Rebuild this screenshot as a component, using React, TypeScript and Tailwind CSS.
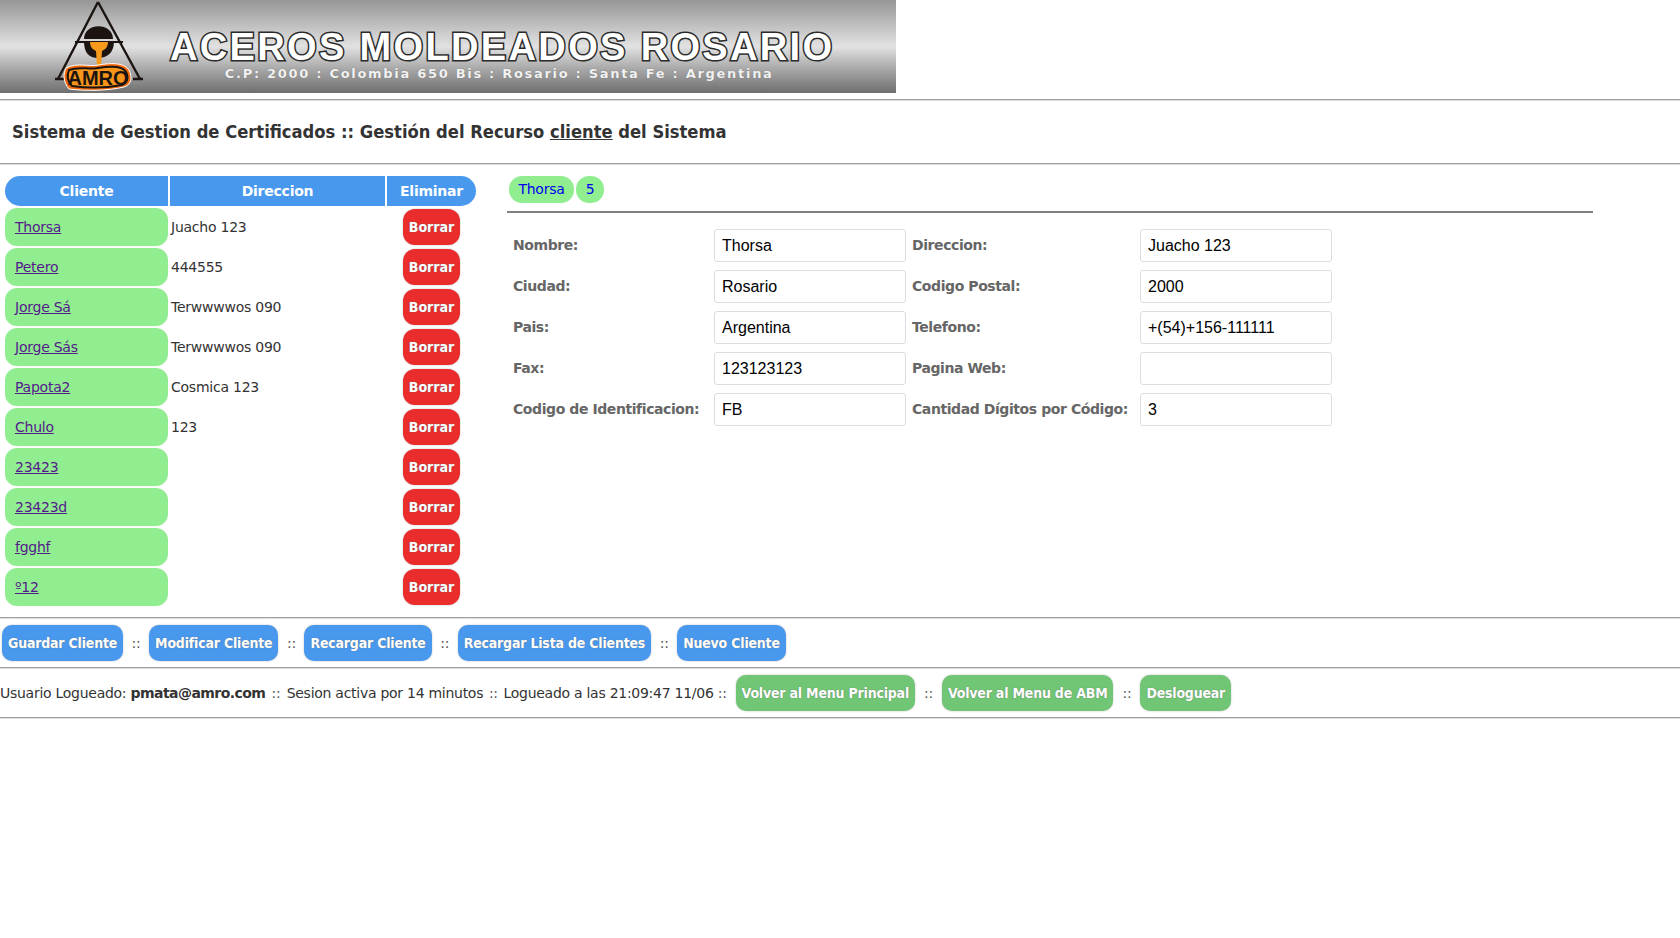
const clientes = [
  { nombre: "Thorsa", direccion: "Juacho 123" },
  { nombre: "Petero", direccion: "444555" },
  { nombre: "Jorge Sá", direccion: "Terwwwwos 090" },
  { nombre: "Jorge Sás", direccion: "Terwwwwos 090" },
  { nombre: "Papota2", direccion: "Cosmica 123" },
  { nombre: "Chulo", direccion: "123" },
  { nombre: "23423", direccion: "" },
  { nombre: "23423d", direccion: "" },
  { nombre: "fgghf", direccion: "" },
  { nombre: "º12", direccion: "" },
]

const campos = [
  ["Nombre:", "Thorsa", "Direccion:", "Juacho 123"],
  ["Ciudad:", "Rosario", "Codigo Postal:", "2000"],
  ["Pais:", "Argentina", "Telefono:", "+(54)+156-111111"],
  ["Fax:", "123123123", "Pagina Web:", ""],
  ["Codigo de Identificacion:", "FB", "Cantidad Dígitos por Código:", "3"],
]

const Sep = ({ className = "" }: { className?: string }) => (
  <span className={`text-[#555] ${className}`}>::</span>
)

function Boton({ children, color }: { children: string; color: "blue" | "green" }) {
  return (
    <a
      className={`inline-flex h-9 items-center rounded-[10px] px-[6px] font-stretch-condensed text-[14px] font-bold tracking-[-0.2px] text-white shadow-[0_0_2px_#bbb] [text-shadow:0_0_1px_#666] ${
        color === "blue" ? "bg-[#4898ee]" : "bg-[#70c674]"
      }`}
    >
      {children}
    </a>
  )
}

function Logo() {
  return (
    <svg viewBox="0 0 100 93" className="h-[93px] w-[100px] shrink-0">
      <path d="M50 2 L10 79 M50 2 L92 79" stroke="#1c1410" strokeWidth="2.4" fill="none" />
      <path d="M7 79 H16 M85 79 H95" stroke="#1c1410" strokeWidth="2.4" />
      <path d="M36 39 C36 22 65 22 65 39 Z" fill="#1c1410" />
      <path d="M27 42 H75" stroke="#1c1410" strokeWidth="2" />
      <path d="M36 41 H66 C66 53 59 58 50 58 C41 58 36 53 36 41 Z" fill="#1c1410" />
      <path d="M42 42 H60 C60 48 56 50 54 51 L53 67 H49 L48 51 C46 50 42 48 42 42 Z" fill="#f59a1c" />
      <path d="M18 68 C30 62 40 67 50 65 C62 63 76 62 81 70 C85 78 83 85 76 87 C60 91 36 91 21 89 C15 82 15 74 18 68 Z" fill="#f26a0a" stroke="#fff" strokeWidth="1" />
      <path d="M21 70 C32 66 40 70 50 68 C62 66 75 66 78 72 C81 78 79 83 74 85 C58 88 38 88 24 86 C19 81 19 75 21 70 Z" fill="#f7941a" stroke="#1c1410" strokeWidth="2" />
      <text x="50" y="85" textAnchor="middle" fontFamily="'Liberation Sans',sans-serif" fontWeight="700" fontSize="20" fill="#1c1410">AMRO</text>
    </svg>
  )
}

export default function App() {
  return (
    <div className="min-h-[938px] bg-white font-['DejaVu_Sans',sans-serif] text-[14px] tracking-[-0.24px] text-[#333]">
      {/* Banner */}
      <div className="flex h-[93px] w-[896px] bg-gradient-to-b from-[#979797] via-[#e2e2e2] to-[#6f6f6f] pl-[48px] tracking-normal">
        <Logo />
        <div className="ml-[22px] flex flex-col items-center pt-[25px]">
          <div className="font-['Liberation_Sans',sans-serif] text-[38px] leading-[44px] font-bold tracking-[2.35px] whitespace-nowrap text-white [-webkit-text-stroke:3px_#2a2a2a] [paint-order:stroke_fill]">
            ACEROS MOLDEADOS ROSARIO
          </div>
          <div className="mt-[-3px] mr-[6px] text-[13px] leading-4 font-bold tracking-[1.7px] whitespace-nowrap text-[#f2f2f2] [text-shadow:0_0_1px_#666]">
            C.P: 2000 : Colombia 650 Bis : Rosario : Santa Fe : Argentina
          </div>
        </div>
      </div>

      <hr className="mt-[6px] border-t border-b-0 border-[#a0a0a0] shadow-[0_1px_0_#ddd]" />
      <h1 className="flex h-[63px] items-center pl-3 font-stretch-condensed text-[18.2px] font-bold tracking-normal text-[#333]">
        <span className="whitespace-nowrap">
          Sistema de Gestion de Certificados :: Gestión del Recurso <u>cliente</u> del Sistema
        </span>
      </h1>
      <hr className="border-t border-b-0 border-[#a0a0a0] shadow-[0_1px_0_#ddd]" />

      {/* Contenido */}
      <div className="flex h-[453px] items-start pt-3">
        <div className="ml-[5px] w-[471px] shrink-0">
          <div className="grid grid-cols-[163px_215px_89px] gap-x-[2px] font-bold text-white">
            <div className="flex h-[30px] items-center justify-center rounded-tl-[15px] rounded-bl-[15px] bg-[#4898ee]">Cliente</div>
            <div className="flex h-[30px] items-center justify-center bg-[#4898ee]">Direccion</div>
            <div className="flex h-[30px] items-center justify-center rounded-tr-[15px] rounded-br-[15px] bg-[#4898ee]">Eliminar</div>
          </div>
          <div className="mt-[2px] flex flex-col gap-y-[2px]">
            {clientes.map((c) => (
              <div key={c.nombre} className="grid h-[38px] grid-cols-[163px_215px_89px] items-center gap-x-[2px]">
                <div className="flex h-[38px] items-center rounded-[12px] bg-[#90ee90] pl-[10px]">
                  <a className="text-[#551a8b] underline">{c.nombre}</a>
                </div>
                <div className="pl-[1px]">{c.direccion}</div>
                <div className="flex justify-center">
                  <a className="flex h-9 w-[57px] items-center justify-center rounded-[12px] bg-[#ea2c2c] font-stretch-condensed font-bold tracking-normal text-white shadow-[0_0_2px_#bbb] [text-shadow:0_0_1px_#666]">
                    Borrar
                  </a>
                </div>
              </div>
            ))}
          </div>
        </div>

        <div className="ml-[31px] w-[1086px]">
          <div className="flex h-[37px] gap-[2px] border-b-2 border-[#808080] pl-[2px]">
            <span className="flex h-[27px] w-[65px] items-center justify-center rounded-[13px] bg-[#90ee90] text-[#0000ee]">Thorsa</span>
            <span className="flex h-[27px] w-[28px] items-center justify-center rounded-[13px] bg-[#90ee90] text-[#0000ee]">5</span>
          </div>
          <div className="mt-4 flex flex-col gap-y-2">
            {campos.map(([l1, v1, l2, v2]) => (
              <div key={l1} className="grid h-[33px] grid-cols-[201px_192px_6px_222px_6px_192px] items-center pl-[6px] font-bold tracking-[-0.42px] text-[#666]">
                <label>{l1}</label>
                <input
                  readOnly
                  value={v1}
                  className="col-start-2 h-[33px] rounded-[3px] border border-[#ddd] px-[7px] font-['Liberation_Sans',sans-serif] text-[16px] font-normal tracking-normal text-black"
                />
                <label className="col-start-4 whitespace-nowrap">{l2}</label>
                <input
                  readOnly
                  value={v2}
                  className="col-start-6 h-[33px] rounded-[3px] border border-[#ddd] px-[7px] font-['Liberation_Sans',sans-serif] text-[16px] font-normal tracking-normal text-black"
                />
              </div>
            ))}
          </div>
        </div>
      </div>

      <hr className="border-t border-b-0 border-[#a0a0a0] shadow-[0_1px_0_#ddd]" />
      <div className="flex h-[49px] items-center gap-[8.5px] pt-[1px] pl-[2px]">
        <Boton color="blue">Guardar Cliente</Boton>
        <Sep />
        <Boton color="blue">Modificar Cliente</Boton>
        <Sep />
        <Boton color="blue">Recargar Cliente</Boton>
        <Sep />
        <Boton color="blue">Recargar Lista de Clientes</Boton>
        <Sep />
        <Boton color="blue">Nuevo Cliente</Boton>
      </div>
      <hr className="border-t border-b-0 border-[#a0a0a0] shadow-[0_1px_0_#ddd]" />
      <div className="flex h-[49px] items-center gap-[9px] pt-[1px] tracking-[-0.27px] whitespace-nowrap">
        <span>
          Usuario Logueado: <b className="tracking-[-0.55px]">pmata@amro.com</b> <Sep className="mx-[2px]" /> Sesion activa por 14 minutos <Sep className="mx-[1.5px]" /> Logueado a las 21:09:47 11/06 <Sep />
        </span>
        <Boton color="green">Volver al Menu Principal</Boton>
        <Sep />
        <Boton color="green">Volver al Menu de ABM</Boton>
        <Sep />
        <Boton color="green">Desloguear</Boton>
      </div>
      <hr className="border-t border-b-0 border-[#a0a0a0] shadow-[0_1px_0_#ddd]" />
    </div>
  )
}
